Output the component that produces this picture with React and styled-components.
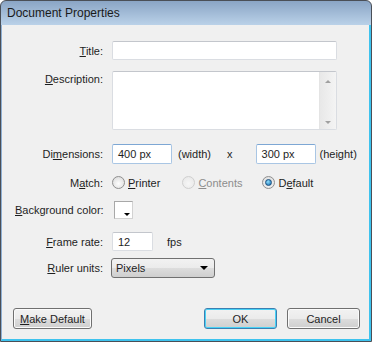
import styled, { createGlobalStyle } from "styled-components"

const Global = createGlobalStyle`
  html, body { margin: 0; padding: 0; background: #ffffff; }
  body { font-family: "Liberation Sans", Arial, sans-serif; }
`

const Window = styled.div`
  width: 372px;
  height: 342px;
  box-sizing: border-box;
  border: 1px solid #4a4f57;
  border-radius: 6px 6px 0 0;
  background: linear-gradient(#8aa5c5, #bcd3ea 25px, #f0f0f0 25px);
  display: flex;
  flex-direction: column;
  overflow: hidden;
`

const TitleBar = styled.div`
  height: 24px;
  display: flex;
  align-items: center;
  padding-left: 6px;
  font-size: 12px;
  color: #1a1a1a;
  flex-shrink: 0;
`

const Body = styled.div`
  flex: 1;
  background: #f0f0f0;
  border-left: 1px solid #8fb0d4;
  border-right: 2px solid #3ec3ee;
  border-bottom: 2px solid #3ec3ee;
  display: flex;
  flex-direction: column;
  padding: 16px 0 0 0;
  font-size: 11px;
  color: #1e1e1e;
`

const Row = styled.div`
  display: grid;
  grid-template-columns: 88px 1fr;
  column-gap: 9px;
  align-items: ${(p) => (p.$top ? "start" : "center")};
  margin-top: ${(p) => p.$mt || 0}px;
  padding-left: 13px;
`

const Label = styled.div`
  text-align: right;
  white-space: nowrap;
  padding-top: ${(p) => p.$pt || 0}px;
  u { text-decoration: underline; text-underline-offset: 1px; }
`

const Field = styled.div`
  display: flex;
  align-items: center;
`

const TextInput = styled.div`
  box-sizing: border-box;
  width: ${(p) => p.$w}px;
  height: ${(p) => p.$h || 19}px;
  background: #fff;
  border: 1px solid ${(p) => (p.$blue ? "#a9c6e4" : "#dadde2")};
  border-top-color: ${(p) => (p.$blue ? "#7da7d4" : "#c3c6cc")};
  border-radius: 2px;
  display: flex;
  align-items: center;
  padding-left: 5px;
  font-size: 11px;
  color: #1e1e1e;
  margin-left: ${(p) => p.$ml || 0}px;
`

const TextArea = styled.div`
  box-sizing: border-box;
  width: 225px;
  height: 59px;
  background: #fff;
  border: 1px solid #dadde2;
  border-top-color: #c3c6cc;
  border-radius: 2px;
  display: flex;
  justify-content: flex-end;
`

const ScrollBar = styled.div`
  width: 16px;
  background: linear-gradient(90deg, #e8e8e8, #f4f4f4);
  border-left: 1px solid #e4e4e4;
  display: flex;
  flex-direction: column;
  justify-content: space-between;
  align-items: center;
  padding: 8px 0 5px;
`

const Arrow = styled.div`
  width: 0;
  height: 0;
  border-left: 3px solid transparent;
  border-right: 3px solid transparent;
  ${(p) =>
    p.$up
      ? "border-bottom: 3px solid #a0a0a0;"
      : "border-top: 3px solid #a0a0a0;"}
`

const Text = styled.span`
  margin-left: ${(p) => p.$ml || 0}px;
  color: ${(p) => (p.$dim ? "#8d8d8d" : "#1e1e1e")};
  u { text-decoration: underline; }
`

const Radio = styled.span`
  box-sizing: border-box;
  width: 13px;
  height: 13px;
  border-radius: 50%;
  border: 1px solid ${(p) => (p.$dim ? "#cfcfcf" : "#8f8f8f")};
  background: ${(p) =>
    p.$dim
      ? "radial-gradient(circle at 50% 60%, #f6f6f6, #e6e6e6)"
      : "radial-gradient(circle at 50% 60%, #fdfdfd, #d6d6d6)"};
  display: inline-flex;
  align-items: center;
  justify-content: center;
  margin-left: ${(p) => p.$ml || 0}px;
  margin-right: 3px;
  &::after {
    content: "";
    display: ${(p) => (p.$on ? "block" : "none")};
    width: 5px;
    height: 5px;
    border-radius: 50%;
    background: radial-gradient(circle at 40% 35%, #8fe0ff, #0d64a8);
    border: 1px solid #1b4f7e;
  }
`

const Swatch = styled.div`
  box-sizing: border-box;
  width: 19px;
  height: 18px;
  margin-left: 2px;
  background: #fff;
  border: 1px solid #a8a8a8;
  border-right-color: #d2d2d2;
  border-bottom-color: #d2d2d2;
  position: relative;
  &::after {
    content: "";
    position: absolute;
    right: 2px;
    bottom: 2px;
    border-left: 3px solid transparent;
    border-right: 3px solid transparent;
    border-top: 3px solid #000;
  }
`

const Select = styled.div`
  box-sizing: border-box;
  width: 104px;
  height: 20px;
  margin-left: -1px;
  border: 1px solid #707070;
  border-radius: 3px;
  background: linear-gradient(#f2f2f2, #ebebeb 50%, #dddddd 50%, #cfcfcf);
  display: flex;
  align-items: center;
  justify-content: space-between;
  padding: 0 6px 0 4px;
  font-size: 11px;
  color: #1e1e1e;
  &::after {
    content: "";
    border-left: 4px solid transparent;
    border-right: 4px solid transparent;
    border-top: 4px solid #000;
  }
`

const Footer = styled.div`
  margin-top: 30px;
  display: flex;
  align-items: center;
  padding: 0 9px 0 11px;
`

const Button = styled.div`
  box-sizing: border-box;
  width: ${(p) => p.$w}px;
  height: 21px;
  border: 1px solid ${(p) => (p.$def ? "#3c7fb1" : "#707070")};
  border-radius: 3px;
  background: linear-gradient(#f2f2f2, #ebebeb 50%, #dddddd 50%, #cfcfcf);
  box-shadow: ${(p) => (p.$def ? "inset 0 0 0 1px #48d2f6" : "inset 0 0 0 1px #fbfbfb")};
  display: flex;
  align-items: center;
  justify-content: center;
  font-size: 11px;
  color: #1e1e1e;
  margin-left: ${(p) => p.$ml || 0}px;
  u { text-decoration: underline; }
`

const Spacer = styled.div`
  flex: 1;
`

const App = () => {
  return (
    <>
      <Global />
      <Window>
        <TitleBar>Document Properties</TitleBar>
        <Body>
          <Row>
            <Label><u>T</u>itle:</Label>
            <Field><TextInput $w={225} /></Field>
          </Row>
          <Row $mt={11} $top>
            <Label $pt={2}><u>D</u>escription:</Label>
            <Field>
              <TextArea>
                <ScrollBar>
                  <Arrow $up />
                  <Arrow />
                </ScrollBar>
              </TextArea>
            </Field>
          </Row>
          <Row $mt={14}>
            <Label>Di<u>m</u>ensions:</Label>
            <Field>
              <TextInput $w={60} $h={20} $blue>400 px</TextInput>
              <Text $ml={6}>(width)</Text>
              <Text $ml={16}>x</Text>
              <TextInput $w={60} $h={20} $blue $ml={23}>300 px</TextInput>
              <Text $ml={4}>(height)</Text>
            </Field>
          </Row>
          <Row $mt={12}>
            <Label>M<u>a</u>tch:</Label>
            <Field>
              <Radio />
              <Text><u>P</u>rinter</Text>
              <Radio $dim $ml={22} />
              <Text $dim><u>C</u>ontents</Text>
              <Radio $on $ml={20} />
              <Text>D<u>e</u>fault</Text>
            </Field>
          </Row>
          <Row $mt={12}>
            <Label><u>B</u>ackground color:</Label>
            <Field><Swatch /></Field>
          </Row>
          <Row $mt={13}>
            <Label><u>F</u>rame rate:</Label>
            <Field>
              <TextInput $w={41}>12</TextInput>
              <Text $ml={14}>fps</Text>
            </Field>
          </Row>
          <Row $mt={7}>
            <Label><u>R</u>uler units:</Label>
            <Field><Select>Pixels</Select></Field>
          </Row>
          <Footer>
            <Button $w={79}><span><u>M</u>ake Default</span></Button>
            <Spacer />
            <Button $w={73} $def>OK</Button>
            <Button $w={73} $ml={10}>Cancel</Button>
          </Footer>
        </Body>
      </Window>
    </>
  )
}

export default App
